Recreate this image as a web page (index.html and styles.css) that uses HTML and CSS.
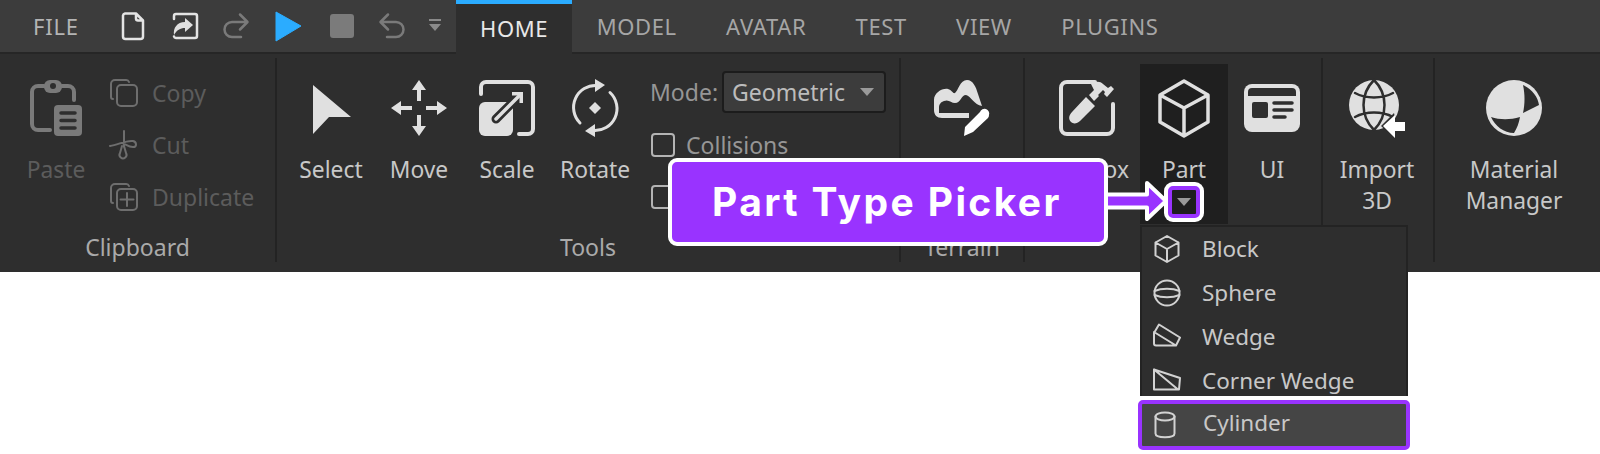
FILE: index.html
```html
<!DOCTYPE html>
<html lang="en">

<head>
  <meta charset="UTF-8">
  <title>Part Type Picker</title>
  <link rel="stylesheet" href="styles.css">
</head>

<body>
  <div class="studio">
    <div class="topbar">
      <span class="file-tab">FILE</span>
      <div class="quick">
        <svg class="quick-icon" viewBox="0 0 28 28"><path class="line-light" d="M7 1.500h11l7 7v16a2.500 2.500 0 0 1-2.500 2.500h-15a2.500 2.500 0 0 1-2.500-2.500v-21a2.500 2.500 0 0 1 2-2zM18 1.500v5a2 2 0 0 0 2 2h5"/></svg>
        <svg class="quick-icon" viewBox="0 0 28 28"><path class="line-light" d="M4 7V4a2 2 0 0 1 2-2h19a2 2 0 0 1 2 2v20a2 2 0 0 1-2 2H6a2 2 0 0 1-2-1.500"/><path class="fill-light" d="M15 6l8 7-8 7v-4c-5 0-8 2-11 7-1-7 3-13 11-13z"/></svg>
        <svg class="quick-icon" viewBox="0 0 28 28"><path class="line-dim" d="M25 10H10a7.500 7.500 0 0 0 0 15h9M18 2.500l7.500 7.500-7.500 7.500"/></svg>
        <svg class="quick-icon" viewBox="0 0 28 28"><path class="play" d="M2 0L27 14 2 29z"/></svg>
        <svg class="quick-icon quick-stop" viewBox="0 0 28 28"><rect class="stop" x="2" y="2" width="24" height="24" rx="3"/></svg>
        <svg class="quick-icon" viewBox="0 0 28 28"><path class="line-dim" d="M3 10h15a7.500 7.500 0 0 1 0 15H9M10 2.500L2.500 10l7.500 7.500"/></svg>
        <svg class="quick-icon quick-more" viewBox="0 0 14 14"><path class="fill-dim" d="M1 0h12v2H1zM1 5h12l-6 7z"/></svg>
      </div>
      <nav class="tabs">
        <span class="tab tab-active">HOME</span>
        <span class="tab">MODEL</span>
        <span class="tab">AVATAR</span>
        <span class="tab">TEST</span>
        <span class="tab">VIEW</span>
        <span class="tab">PLUGINS</span>
      </nav>
    </div>

    <div class="ribbon">
      <section class="group group-clipboard">
        <div class="group-body">
          <div class="tool tool-paste">
            <svg class="tool-icon" viewBox="0 0 56 56">
              <path class="line-grey" d="M22 50H10a6 6 0 0 1-6-6V12a6 6 0 0 1 6-6h6M34 6h6a6 6 0 0 1 6 6v8" />
              <rect class="fill-grey" x="16" y="0" width="18" height="13" rx="6" />
              <circle class="hole" cx="25" cy="6" r="3" />
              <rect class="fill-grey" x="26" y="25" width="28" height="31" rx="4" />
              <path class="hole-line" d="M33 33h14M33 40.500h14M33 48h14" />
            </svg>
            <span class="tool-label is-disabled">Paste</span>
          </div>
          <ul class="small-list">
            <li class="small-row">
              <svg class="small-icon" viewBox="0 0 28 28"><path class="line-thin" d="M3 20a2 2 0 0 1-2-2V5a4 4 0 0 1 4-4h11a3 3 0 0 1 3 2"/><rect class="line-thin" x="7" y="6" width="20" height="21" rx="4"/></svg>
              <span>Copy</span>
            </li>
            <li class="small-row">
              <svg class="small-icon" viewBox="0 0 28 28"><path class="line-thin" d="M14 0v16M0 15c8-1 16-6 23-5 4 1 4 6 0 6-5 0-7-3-11-4M12 15l-2 7a3.500 3.500 0 1 0 6 0l-2-7"/></svg>
              <span>Cut</span>
            </li>
            <li class="small-row">
              <svg class="small-icon" viewBox="0 0 28 28"><path class="line-thin" d="M3 20a2 2 0 0 1-2-2V5a4 4 0 0 1 4-4h11a3 3 0 0 1 3 2"/><rect class="line-thin" x="7" y="6" width="20" height="21" rx="4"/><path class="line-thin" d="M17 10v13M10.500 16.500h13"/></svg>
              <span>Duplicate</span>
            </li>
          </ul>
        </div>
        <div class="group-label">Clipboard</div>
      </section>

      <section class="group group-tools">
        <div class="group-body">
          <div class="tool">
            <svg class="tool-icon" viewBox="0 0 56 56"><path class="fill-light" d="M10 5l38 32H26L10 54z"/></svg>
            <span class="tool-label">Select</span>
          </div>
          <div class="tool">
            <svg class="tool-icon" viewBox="0 0 56 56">
              <g class="fill-light">
                <path d="M28 0l7 10h-5v11h-4V10h-5z" />
                <path d="M28 0l7 10h-5v11h-4V10h-5z" transform="rotate(90 28 28)" />
                <path d="M28 0l7 10h-5v11h-4V10h-5z" transform="rotate(180 28 28)" />
                <path d="M28 0l7 10h-5v11h-4V10h-5z" transform="rotate(270 28 28)" />
              </g>
            </svg>
            <span class="tool-label">Move</span>
          </div>
          <div class="tool">
            <svg class="tool-icon" viewBox="0 0 56 56">
              <path class="line-bold" d="M2 14V7a5 5 0 0 1 5-5h42a5 5 0 0 1 5 5v42a5 5 0 0 1-5 5h-9" />
              <rect class="fill-light" x="0" y="22" width="34" height="34" rx="6" />
              <path class="scale-gap" d="M17 39l21-21" />
              <path class="scale-shaft" d="M17 39l23-23" />
              <path class="fill-light" d="M33 12h11v11h-3.500v-7.500H33z" />
            </svg>
            <span class="tool-label">Scale</span>
          </div>
          <div class="tool">
            <svg class="tool-icon" viewBox="0 0 56 56">
              <path class="line-bold line-rotate" d="M13 43A22 22 0 0 1 30 5.500M43 12.500A22 22 0 0 1 26 50.500" />
              <path class="fill-light" d="M28-1l10 6-10 7zM28 57l-10-6 10-7z" />
              <path class="fill-light" d="M28 22l6 6-6 6-6-6z" />
            </svg>
            <span class="tool-label">Rotate</span>
          </div>
          <div class="options">
            <div class="mode-row">
              <span class="mode-label">Mode:</span>
              <div class="mode-select">
                <span>Geometric</span>
                <i class="caret"></i>
              </div>
            </div>
            <label class="check-row"><i class="checkbox"></i>Collisions</label>
            <label class="check-row"><i class="checkbox"></i>Join Surfaces</label>
          </div>
        </div>
        <div class="group-label">Tools</div>
      </section>

      <section class="group group-terrain">
        <div class="group-body">
          <div class="tool">
            <svg class="tool-icon" viewBox="0 0 56 56">
              <path class="fill-light" d="M0 20c0-7 8-12 14-11 4 1 5 5 7 4 3-2 5-13 12-13 6 0 9 7 11 14l4 12c-8-1-11-10-16-11-5 0-5 8-11 8-4 0-6-4-11-2-3 1-5 3-5 7v5h30v5H8c-5 0-8-3-8-8z" />
              <path class="fill-white" d="M46 32a3 3 0 0 1 9 3 4 4 0 0 1-1 3L39 52l-9 4 1-9 15-15z" />
            </svg>
            <span class="tool-label">Editor</span>
          </div>
        </div>
        <div class="group-label">Terrain</div>
      </section>

      <section class="group group-gameplay">
        <div class="group-body">
          <div class="tool tool-toolbox">
            <svg class="tool-icon" viewBox="0 0 56 56">
              <path class="line-bold" d="M36 2H8a6 6 0 0 0-6 6v40a6 6 0 0 0 6 6h40a6 6 0 0 0 6-6V24" />
              <path class="fill-light" d="M27 17l9 9-15 15c-3 3-7 3-9 1-3-3-2-7 1-10zM30 15l5-5-3-6c5-3 9-3 12 0l5 4 3-2 3 3-7 8-3-3 1-2-2-2-5 5 1 1-5 5z" />
            </svg>
            <span class="tool-label">Toolbox</span>
          </div>
          <div class="tool tool-part">
            <svg class="tool-icon" viewBox="0 0 56 56"><path class="line-bold line-cube" d="M28 1l24 14v27L28 56 4 42V15zM4 15l24 13 24-13M28 28v28"/></svg>
            <span class="tool-label">Part</span>
          </div>
          <div class="tool">
            <svg class="tool-icon" viewBox="0 0 56 56">
              <rect class="fill-light" x="0" y="4" width="56" height="48" rx="8" />
              <path class="hole" d="M4 12a4 4 0 0 1 4-4h40a4 4 0 0 1 4 4v4H4z" />
              <rect class="hole" x="8" y="22" width="16" height="16" rx="2" />
              <path class="hole-line" d="M30 23h18M30 30h18M30 37h11" />
            </svg>
            <span class="tool-label">UI</span>
          </div>
        </div>
        <div class="group-label"></div>
      </section>

      <section class="group group-import">
        <div class="group-body">
          <div class="tool">
            <svg class="tool-icon" viewBox="0 0 56 56">
              <circle class="fill-light" cx="25" cy="25" r="25" />
              <path class="globe-line" d="M25 0c-14 14-14 36 0 50M25 0c14 14 14 36 0 50M6 13c11 6 27 6 38 0M6 37c11-6 27-6 38 0" />
              <path class="globe-halo" d="M32 46l13-13 3 13-3 12z" />
              <path class="fill-white" d="M34 46l12-11v7h10v9H46v7z" />
            </svg>
            <span class="tool-label">Import<br>3D</span>
          </div>
        </div>
        <div class="group-label"></div>
      </section>

      <section class="group group-material">
        <div class="group-body">
          <div class="tool">
            <svg class="tool-icon" viewBox="0 0 56 56">
              <circle class="fill-light" cx="28" cy="28" r="28" />
              <path class="hole" d="M37 5c9 4 15 12 16 20L37 33c2-9 2-19 0-28zM5 37c9 3 19 3 29 0-1 6-3 11-6 16C18 53 9 46 5 37z" />
            </svg>
            <span class="tool-label">Material<br>Manager</span>
          </div>
        </div>
        <div class="group-label"></div>
      </section>
    </div>
  </div>

  <!-- dropdown under the Part button -->
  <div class="part-menu">
    <ul class="menu-list">
      <li class="menu-row">
        <svg class="menu-icon" viewBox="0 0 28 28"><path class="line-menu" d="M14 1l11.500 6.500v13L14 27 2.500 20.500v-13zM2.500 7.500L14 14l11.500-6.500M14 14v13"/></svg>
        <span>Block</span>
      </li>
      <li class="menu-row">
        <svg class="menu-icon" viewBox="0 0 28 28"><circle class="line-menu" cx="14" cy="14" r="12.500"/><path class="line-menu" d="M1.500 12c7-3 18-3 25 0M1.500 16c7 3 18 3 25 0"/></svg>
        <span>Sphere</span>
      </li>
      <li class="menu-row">
        <svg class="menu-icon" viewBox="0 0 28 28"><path class="line-menu" d="M6 1.500l21 13-4 8H3a2 2 0 0 1-2-2V10zM1 9l22 13.500"/></svg>
        <span>Wedge</span>
      </li>
      <li class="menu-row">
        <svg class="menu-icon" viewBox="0 0 28 28"><path class="line-menu" d="M1 2.500l26 8.500-1 11.500H1zM1 2.500l24 20"/></svg>
        <span>Corner Wedge</span>
      </li>
    </ul>
    <div class="menu-row menu-selected">
      <svg class="menu-icon" viewBox="0 0 28 28"><path class="line-menu" d="M4.500 5.500v17c0 5 19 5 19 0v-17"/><ellipse class="line-menu" cx="14" cy="5.500" rx="9.500" ry="4"/></svg>
      <span>Cylinder</span>
    </div>
  </div>

  <!-- callout pointing at the part picker -->
  <div class="callout">Part Type Picker</div>
  <svg class="callout-arrow" viewBox="0 0 64 44">
    <path class="arrow-body" d="M0 15.500h41V4l19 18-19 18V28.500H0z" />
  </svg>
  <div class="picker-mark"><i class="caret caret-part"></i></div>
</body>

</html>
```

FILE: styles.css
```css
* {
  box-sizing: border-box;
}

body {
  margin: 0;
  background-color: #fff;
  font-family: 'Noto Sans', sans-serif;
  position: relative;
  height: 454px;
  overflow: hidden;
}

ul {
  list-style: none;
  margin: 0;
  padding: 0;
}

/* top bar */
.topbar {
  display: flex;
  height: 54px;
  background-color: #3c3c3c;
  border-bottom: 2px solid #262626;
}

.file-tab {
  width: 112px;
  padding-left: 33px;
  font-size: 22px;
  letter-spacing: 0.8px;
  line-height: 52px;
  color: #b4b4b4;
}

.quick {
  display: flex;
  align-items: center;
  width: 344px;
  padding-left: 6px;
}

.quick-icon {
  width: 28px;
  height: 28px;
  margin-right: 24px;
  overflow: visible;
  flex: none;
}

.quick-stop {
  margin-left: 2px;
  margin-right: 22px;
}

.quick-more {
  width: 14px;
  height: 14px;
  margin-left: -2px;
  margin-right: 0;
}

.tabs {
  display: flex;
}

.tab {
  height: 54px;
  padding: 0 24.700px;
  font-size: 22px;
  letter-spacing: 0.6px;
  line-height: 52px;
  color: #a6a6a6;
}

.tab-active {
  padding: 0 24px;
  background-color: #2e2e2e;
  border-top: 4px solid #2bacff;
  line-height: 48px;
  color: #e8e8e8;
}

/* ribbon */
.ribbon {
  display: flex;
  height: 218px;
  padding: 4px 0 10px;
  background-color: #2e2e2e;
}

.group {
  display: flex;
  flex-direction: column;
  border-right: 2px solid #232323;
}

.group-body {
  display: flex;
  flex: 1;
  padding-top: 22px;
}

.group-label {
  height: 34px;
  margin-top: 2px;
  margin-bottom: -2px;
  font-size: 23px;
  line-height: 34px;
  text-align: center;
  color: #aaa;
}

.group-clipboard {
  width: 277px;
}

.group-tools {
  width: 624px;
}

.group-terrain {
  width: 124px;
}

.group-gameplay {
  width: 298px;
}

.group-import {
  width: 112px;
}

.group-material {
  width: 165px;
  border-right: none;
}

.group-tools .group-body {
  padding-left: 10px;
}

.group-terrain .group-body {
  padding-left: 17px;
}

.group-gameplay .group-body {
  padding-left: 18px;
}

.group-import .group-body {
  padding-left: 10px;
}

.group-material .group-body {
  padding-left: 35px;
}

.tool {
  display: flex;
  flex-direction: column;
  align-items: center;
  width: 88px;
  flex: none;
}

.tool-icon {
  width: 56px;
  height: 56px;
  flex: none;
  overflow: visible;
}

.tool-label {
  margin-top: 18px;
  font-size: 22.800px;
  line-height: 31px;
  text-align: center;
  color: #c8c8c8;
}

.is-disabled {
  color: #5c5c5c;
}

.tool-paste {
  margin-left: 12px;
}

.tool-toolbox {
  margin-right: 9px;
}

.tool-part {
  height: 160px;
  margin-top: -16px;
  padding-top: 16px;
  background-color: #1f1f1f;
}

/* clipboard list */
.small-list {
  margin: -13px 0 0 10px;
}

.small-row {
  display: flex;
  align-items: center;
  gap: 14px;
  height: 52px;
  font-size: 23px;
  color: #5c5c5c;
}

.small-icon {
  width: 28px;
  height: 28px;
  flex: none;
  overflow: visible;
}

/* tool options */
.options {
  margin: -9px 0 0 11px;
}

.mode-row {
  display: flex;
  align-items: center;
  gap: 4px;
  height: 42px;
  font-size: 23px;
  color: #969696;
}

.mode-select {
  display: flex;
  align-items: center;
  justify-content: space-between;
  width: 164px;
  height: 42px;
  padding: 0 10px 0 8px;
  background-color: #3c3c3c;
  border: 2px solid #1c1c1c;
  border-radius: 4px;
  color: #bcbcbc;
}

.caret {
  display: block;
  width: 0;
  height: 0;
  border-left: 7px solid transparent;
  border-right: 7px solid transparent;
  border-top: 8px solid #9a9a9a;
}

.check-row {
  display: flex;
  align-items: center;
  gap: 11px;
  height: 52px;
  padding-left: 1px;
  font-size: 23px;
  color: #969696;
}

.check-row:nth-child(2) {
  margin-top: 6px;
}

.checkbox {
  display: block;
  width: 24px;
  height: 24px;
  border: 2px solid #b4b4b4;
  border-radius: 4px;
}

/* part dropdown */
.part-menu {
  position: absolute;
  top: 225px;
  left: 1138px;
  width: 272px;
}

.menu-list {
  height: 171px;
  margin: 0 2px;
  overflow: hidden;
  background-color: #2e2e2e;
  border: 2px solid #232323;
  border-bottom: none;
}

.menu-row {
  display: flex;
  align-items: center;
  gap: 21px;
  height: 44px;
  padding: 0 0 5px 11px;
  font-size: 22.500px;
  color: #c8c8c8;
}

.menu-list .menu-row:first-child {
  margin-top: 2px;
}

.menu-icon {
  width: 28px;
  height: 28px;
  flex: none;
}

.menu-selected {
  height: 50px;
  margin-top: 4px;
  padding-left: 9px;
  background-color: #454545;
  border: 4px solid #9933ff;
  border-radius: 5px;
}

.menu-selected .menu-icon {
  margin-right: 3px;
  position: relative;
  top: 2px;
}

/* callout */
.callout {
  position: absolute;
  top: 158px;
  left: 668px;
  width: 440px;
  height: 88px;
  padding-left: 40px;
  background-color: #9933ff;
  border: 4px solid #fff;
  border-radius: 9px;
  font-family: 'Inter', sans-serif;
  font-size: 39px;
  font-weight: 700;
  letter-spacing: 2.400px;
  line-height: 80px;
  color: #fff;
}

.callout-arrow {
  position: absolute;
  top: 179px;
  left: 1106px;
  width: 64px;
  height: 44px;
  overflow: visible;
}

.arrow-body {
  fill: #9933ff;
  stroke: #fff;
  stroke-width: 4;
  stroke-linejoin: round;
}

.picker-mark {
  position: absolute;
  top: 186px;
  left: 1168px;
  display: flex;
  align-items: center;
  justify-content: center;
  width: 32px;
  height: 32px;
  background-color: #1f1f1f;
  border: 4px solid #9933ff;
  border-radius: 5px;
  box-shadow: 0 0 0 4px #fff;
}

/* svg paints */
.line-light,
.line-dim,
.line-grey,
.line-bold,
.line-thin,
.line-menu,
.hole-line,
.globe-line,
.scale-gap,
.scale-shaft {
  fill: none;
  stroke-linecap: round;
  stroke-linejoin: round;
}

.line-light {
  stroke: #e4e4e4;
  stroke-width: 2.500;
}

.line-dim {
  stroke: #7a7a7a;
  stroke-width: 2.500;
}

.line-grey {
  stroke: #7a7a7a;
  stroke-width: 4;
}

.line-bold {
  stroke: #e0e0e0;
  stroke-width: 4;
}

.line-rotate {
  stroke-width: 3;
}

.line-cube {
  stroke-width: 3.500;
}

.line-thin {
  stroke: #6e6e6e;
  stroke-width: 2;
}

.line-menu {
  stroke: #d2d2d2;
  stroke-width: 2;
}

.fill-light {
  fill: #e0e0e0;
}

.fill-white {
  fill: #fff;
}

.fill-dim {
  fill: #8a8a8a;
}

.fill-grey {
  fill: #7a7a7a;
}

.play {
  fill: #2bacff;
  stroke: #2bacff;
  stroke-width: 1;
  stroke-linejoin: round;
}

.stop {
  fill: #7b7b7b;
}

.hole {
  fill: #2e2e2e;
}

.hole-line {
  stroke: #2e2e2e;
  stroke-width: 3.500;
}

.globe-line {
  stroke: #2e2e2e;
  stroke-width: 2.500;
}

.globe-halo {
  fill: #2e2e2e;
}

.scale-gap {
  stroke: #2e2e2e;
  stroke-width: 9;
}

.scale-shaft {
  stroke: #e0e0e0;
  stroke-width: 3.500;
}
```
